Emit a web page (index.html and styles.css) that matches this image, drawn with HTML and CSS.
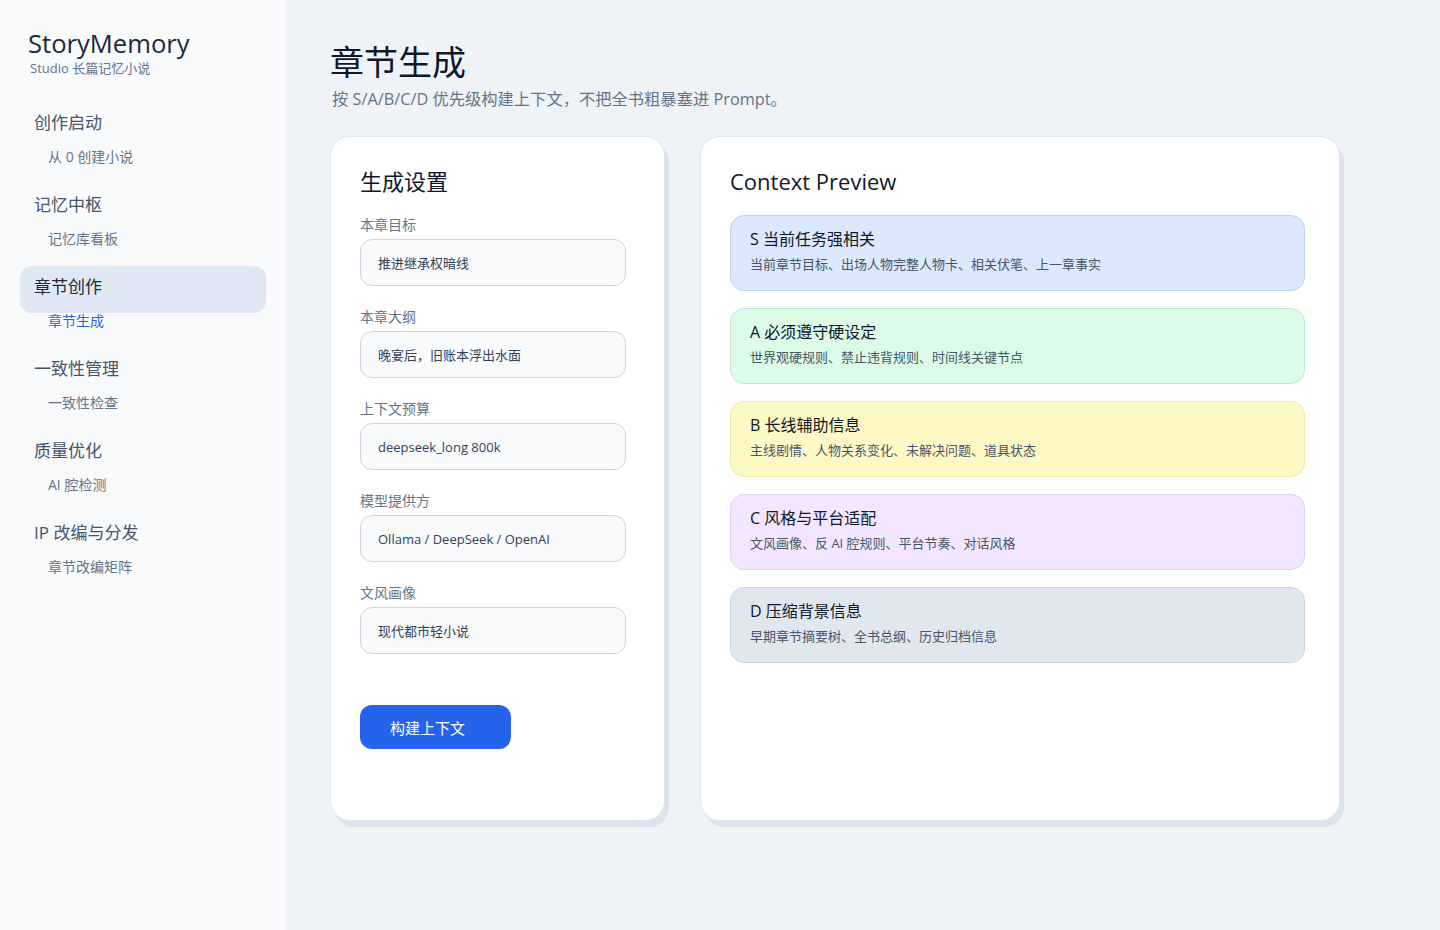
FILE: index.html
```html
<!DOCTYPE html>
<html lang="zh-CN">
<head>
  <meta charset="UTF-8" />
  <meta name="viewport" content="width=device-width, initial-scale=1.0"/>
  <title>章节生成 | StoryMemory Studio</title>
  <link rel="stylesheet" href="styles.css">
</head>
<body>
  <div class="app">
    <aside class="sidebar">
      <div class="brand">
        <div class="brand-name">StoryMemory</div>
        <div class="brand-sub">Studio 长篇记忆小说</div>
      </div>

      <nav class="nav">
        <div class="nav-group">
          <div class="nav-title">创作启动</div>
          <a class="nav-link" href="#">从 0 创建小说</a>
        </div>
        <div class="nav-group">
          <div class="nav-title">记忆中枢</div>
          <a class="nav-link" href="#">记忆库看板</a>
        </div>
        <div class="nav-group active">
          <div class="nav-title">章节创作</div>
          <a class="nav-link" href="#">章节生成</a>
        </div>
        <div class="nav-group">
          <div class="nav-title">一致性管理</div>
          <a class="nav-link" href="#">一致性检查</a>
        </div>
        <div class="nav-group">
          <div class="nav-title">质量优化</div>
          <a class="nav-link" href="#">AI 腔检测</a>
        </div>
        <div class="nav-group">
          <div class="nav-title">IP 改编与分发</div>
          <a class="nav-link" href="#">章节改编矩阵</a>
        </div>
      </nav>
    </aside>

    <main class="main">
      <h1 class="page-title">章节生成</h1>
      <p class="page-desc">按 S/A/B/C/D 优先级构建上下文，不把全书粗暴塞进 Prompt。</p>

      <div class="panels">
        <section class="card settings">
          <h2>生成设置</h2>

          <label class="field">
            <span class="field-label">本章目标</span>
            <input type="text" value="推进继承权暗线">
          </label>
          <label class="field">
            <span class="field-label">本章大纲</span>
            <input type="text" value="晚宴后，旧账本浮出水面">
          </label>
          <label class="field">
            <span class="field-label">上下文预算</span>
            <input type="text" value="deepseek_long 800k">
          </label>
          <label class="field">
            <span class="field-label">模型提供方</span>
            <input type="text" value="Ollama / DeepSeek / OpenAI">
          </label>
          <label class="field">
            <span class="field-label">文风画像</span>
            <input type="text" value="现代都市轻小说">
          </label>

          <button class="btn-primary">构建上下文</button>
        </section>

        <section class="card preview">
          <h2>Context Preview</h2>

          <div class="tier tier-s">
            <div class="tier-title">S 当前任务强相关</div>
            <div class="tier-desc">当前章节目标、出场人物完整人物卡、相关伏笔、上一章事实</div>
          </div>
          <div class="tier tier-a">
            <div class="tier-title">A 必须遵守硬设定</div>
            <div class="tier-desc">世界观硬规则、禁止违背规则、时间线关键节点</div>
          </div>
          <div class="tier tier-b">
            <div class="tier-title">B 长线辅助信息</div>
            <div class="tier-desc">主线剧情、人物关系变化、未解决问题、道具状态</div>
          </div>
          <div class="tier tier-c">
            <div class="tier-title">C 风格与平台适配</div>
            <div class="tier-desc">文风画像、反 AI 腔规则、平台节奏、对话风格</div>
          </div>
          <div class="tier tier-d">
            <div class="tier-title">D 压缩背景信息</div>
            <div class="tier-desc">早期章节摘要树、全书总纲、历史归档信息</div>
          </div>
        </section>
      </div>
    </main>
  </div>
</body>
</html>
```

FILE: styles.css
```css
* {
  box-sizing: border-box;
}

body {
  margin: 0;
  padding: 0;
  font-family: 'Open Sans', 'Noto Sans CJK SC', sans-serif;
  background: #eff3f8;
  color: #0f172a;
}

.app {
  display: flex;
  min-height: 930px;
}

/* sidebar */

.sidebar {
  width: 286px;
  flex-shrink: 0;
  background: #f8fafc;
  padding: 28px 20px;
}

.brand {
  padding-left: 8px;
}

.brand-name {
  font-size: 25.6px;
  line-height: 32px;
  color: #1e293b;
}

.brand-sub {
  font-size: 13px;
  line-height: 16px;
  color: #64748b;
  padding-left: 2px;
}

.nav {
  margin-top: 26px;
}

.nav-group {
  margin-bottom: 19px;
}

.nav-title {
  padding: 9px 14px 15px;
  font-size: 17px;
  line-height: 23px;
  color: #475569;
  border-radius: 12px;
}

.nav-link {
  display: block;
  padding-left: 28px;
  font-size: 14px;
  line-height: 16px;
  color: #64748b;
  text-decoration: none;
}

.nav-group.active .nav-title {
  background: #e0e8f4;
  color: #1e293b;
}

.nav-group.active .nav-link {
  color: #2563eb;
}

/* main */

.main {
  flex: 1;
  padding: 42px 44px;
}

.page-title {
  margin: 0;
  font-size: 34px;
  line-height: 40px;
  font-weight: 400;
  color: #0f172a;
}

.page-desc {
  margin: 6px 0 0 2px;
  font-size: 16.3px;
  line-height: 22px;
  color: #64748b;
}

.panels {
  display: grid;
  grid-template-columns: 335px 640px;
  gap: 35px;
  margin-top: 26px;
}

.card {
  min-height: 685px;
  background: #fff;
  border: 1px solid #e2e8f0;
  border-radius: 20px;
  box-shadow: 4px 6px 0 #dce3ec;
  padding: 29px 38px 29px 29px;
}

.card h2 {
  margin: 0;
  font-size: 22px;
  line-height: 30px;
  font-weight: 400;
  color: #0f172a;
}

/* settings form */

.field {
  display: block;
  margin-top: 20px;
}

.field + .field {
  margin-top: 22px;
}

.field-label {
  display: block;
  font-size: 14px;
  line-height: 18px;
  color: #64748b;
}

.field input {
  display: block;
  width: 100%;
  height: 47px;
  margin-top: 5px;
  padding: 0 17px;
  font-family: inherit;
  font-size: 13px;
  color: #334155;
  background: #f8fafc;
  border: 1px solid #cbd5e1;
  border-radius: 12px;
  outline: none;
}

.btn-primary {
  display: block;
  width: 151px;
  margin-top: 51px;
  height: 44px;
  padding: 0 0 0 30px;
  text-align: left;
  font-family: inherit;
  font-size: 15px;
  color: #fff;
  background: #2563eb;
  border: none;
  border-radius: 12px;
  cursor: pointer;
}

/* context preview */

.preview {
  padding-right: 34px;
}

.preview h2 {
  margin-bottom: 19px;
}

.tier {
  padding: 12px 19px 17px;
  border: 1px solid;
  border-radius: 14px;
  margin-bottom: 17px;
}

.tier-title {
  font-size: 16px;
  line-height: 22px;
  color: #0f172a;
}

.tier-desc {
  margin-top: 5px;
  font-size: 13px;
  line-height: 18px;
  color: #475569;
}

.tier-s { background: #dbe8fd; border-color: #bfd3ee; }
.tier-a { background: #dcfce8; border-color: #bde9cf; }
.tier-b { background: #fef8c4; border-color: #f3e7a6; }
.tier-c { background: #f3e6fe; border-color: #e1cff3; }
.tier-d { background: #e1e7ef; border-color: #cbd5e1; }
```
